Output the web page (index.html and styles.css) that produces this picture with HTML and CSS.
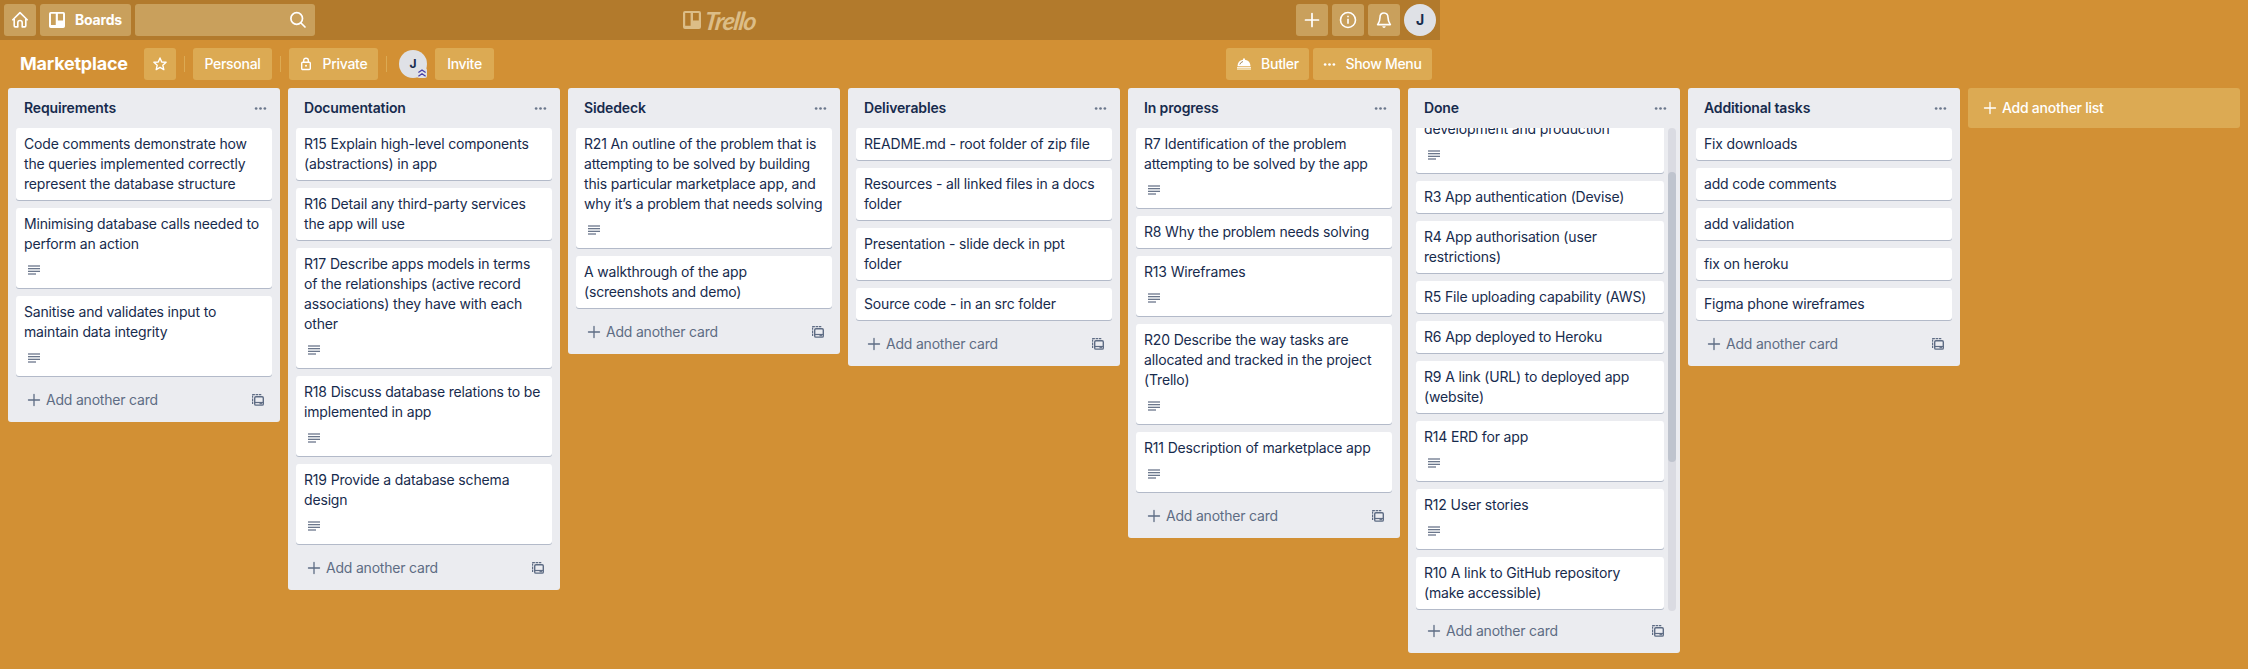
FILE: index.html
```html
<!DOCTYPE html>
<html lang="en">
<head>
<meta charset="utf-8">
<title>Marketplace | Trello</title>
<link rel="stylesheet" href="styles.css">
</head>
<body>
<svg class="sprite" aria-hidden="true">
  <symbol id="plus" viewBox="0 0 16 16"><path d="M8 1.700v12.600M1.700 8h12.600" fill="none" stroke="currentColor" stroke-width="1.500" stroke-linecap="round"/></symbol>
  <symbol id="dots" viewBox="0 0 14 14"><circle cx="2.300" cy="7" r="1.450"/><circle cx="7" cy="7" r="1.450"/><circle cx="11.700" cy="7" r="1.450"/></symbol>
  <symbol id="desc" viewBox="0 0 12 10"><path d="M0 0h12v2H0zM0 8h8v2H0z" opacity=".65"/><path d="M0 3h12v1H0zM0 6h12v1H0z"/><path d="M0 4h12v2H0z" opacity=".3"/></symbol>
  <symbol id="template" viewBox="0 0 12 12"><path d="M.6 10V.6H10" fill="none" stroke="currentColor" stroke-width="1.200" stroke-dasharray="2.400 .7"/><rect x="2.700" y="2.700" width="8.600" height="8.400" rx="1.200" fill="none" stroke="currentColor" stroke-width="1.400"/><path d="M3 8.500h8" stroke="currentColor" stroke-width="1.200"/><path d="M7.500 9.700h2.500" stroke="currentColor" stroke-width="1.200"/></symbol>
  <symbol id="board" viewBox="0 0 18 18"><path fill-rule="evenodd" d="M2 0h14a2 2 0 0 1 2 2v14a2 2 0 0 1-2 2H2a2 2 0 0 1-2-2V2a2 2 0 0 1 2-2zM2.200 2v12.700h5.400V2zM10 2v7.500h5.800V2z"/></symbol>
</svg>

<header class="topbar">
  <div class="topbar-side">
    <a class="nav-btn"><svg width="18" height="18" viewBox="0 0 18 18" fill="none" stroke="currentColor" stroke-width="1.600" stroke-linejoin="round" stroke-linecap="round"><path d="M1.800 8.800 9 1.600l7.200 7.200M3.200 8v6.800q0 1.100 1.100 1.100h2.500v-4.200q0-2.200 2.200-2.200t2.200 2.200v4.200h2.500q1.100 0 1.100-1.100V8"/></svg></a>
    <a class="nav-btn boards"><svg class="board-icon"><use href="#board"/></svg>Boards</a>
    <div class="search"><svg width="18" height="18" viewBox="0 0 18 18" fill="none" stroke="currentColor" stroke-width="1.700" stroke-linecap="round"><circle cx="7.700" cy="7.500" r="5.800"/><path d="m12 12 4 4"/></svg></div>
  </div>
  <div class="logo"><svg class="board-icon"><use href="#board"/></svg><span>Trello</span></div>
  <div class="topbar-side">
    <a class="nav-btn"><svg width="20" height="20" viewBox="0 0 20 20" fill="none" stroke="currentColor" stroke-width="1.700" stroke-linecap="round"><path d="M10 3.500v13M3.500 10h13"/></svg></a>
    <a class="nav-btn"><svg width="18" height="18" viewBox="0 0 18 18" fill="none" stroke="currentColor" stroke-width="1.600"><circle cx="9" cy="9" r="7.500"/><path d="M9 7.700v5M9 4.700v1.600"/></svg></a>
    <a class="nav-btn"><svg width="18" height="18" viewBox="0 0 18 18" fill="none" stroke="currentColor" stroke-width="1.600" stroke-linejoin="round"><path d="M9 2C6.200 2 5 4 5 6.500 5 10 3.800 11.600 2.600 13.600h12.800C14.200 11.600 13 10 13 6.500 13 4 11.800 2 9 2z"/><path d="M7.200 15.200h3.600Q10.400 17 9 17t-1.800-1.800z" fill="currentColor" stroke="none"/></svg></a>
    <span class="avatar avatar-lg">J</span>
  </div>
</header>

<div class="boardbar">
  <h1>Marketplace</h1>
  <a class="board-btn star"><svg width="14" height="14" viewBox="0 0 14 14" fill="none" stroke="currentColor" stroke-width="1.400" stroke-linejoin="round"><path d="m7 1 1.700 4 4.400.3-3.300 2.900 1 4.400L7 10.300l-3.800 2.300 1-4.400L.9 5.300 5.300 5z"/></svg></a>
  <i class="sep"></i>
  <a class="board-btn personal">Personal</a>
  <i class="sep"></i>
  <a class="board-btn private"><svg width="12" height="14" viewBox="0 0 12 14" fill="none" stroke="currentColor" stroke-width="1.400"><rect x="1.700" y="5.200" width="8.600" height="7.300" rx="1"/><path d="M3.700 5V3.300Q3.700 1.200 6 1.200t2.300 2.100V5"/><circle cx="6" cy="8.800" r="1" fill="currentColor" stroke="none"/></svg>Private</a>
  <i class="sep"></i>
  <span class="avatar avatar-sm">J<svg class="admin" viewBox="0 0 10 10"><path d="M1.400 4.500 5 2l3.600 2.500M1.400 8.300 5 5.800l3.600 2.500" fill="none" stroke="#4a3fa5" stroke-width="1.300"/></svg></span>
  <a class="board-btn invite">Invite</a>
  <a class="board-btn butler"><svg width="16" height="14" viewBox="0 0 16 14"><path d="M1.500 9.200Q1.700 3.600 7 2.700V1.400h2v1.300q5.300.9 5.500 6.500z" fill="#fff"/><path d="M3.800 7.500Q4.400 5.200 7 4.500" fill="none" stroke="#a58b60" stroke-width="1"/><path d="M1 10.200h14v1.200H1z" fill="#fff"/><path d="M1 11.400h14V13H1z" fill="#f1dba8"/></svg>Butler</a>
  <a class="board-btn menu"><svg width="13" height="13" fill="#fff"><use href="#dots"/></svg>Show Menu</a>
</div>

<main class="lists" id="lists"></main>
<script src="board.js"></script>
</body>
</html>
```
FILE: styles.css
```css
* { box-sizing: border-box; }
body { margin: 0; height: 669px; overflow: hidden; background: #d29034; color: #172b4d; font: 14px/20px Inter, "Liberation Sans", sans-serif; letter-spacing: -.165px; }
.sprite { display: none; }
svg { flex: none; }

.topbar { width: 1440px; height: 40px; padding: 4px; background: #b27a2c; display: flex; justify-content: space-between; }
.topbar-side { display: flex; gap: 4px; width: 600px; }
.topbar-side:last-child { justify-content: flex-end; }
.nav-btn { min-width: 32px; height: 32px; border-radius: 3px; background: #c9a05c; color: #fff; display: flex; align-items: center; justify-content: center; font-weight: 700; }
.boards { width: 91px; gap: 10px; font-size: 14px; letter-spacing: -.2px; }
.board-icon { width: 16px; height: 16px; fill: currentColor; }
.search { width: 180px; height: 32px; border-radius: 3px; background: #c9a05c; color: #fff; display: flex; align-items: center; justify-content: flex-end; padding-right: 8px; }
.logo { display: flex; align-items: center; gap: 4px; width: 74px; color: #dcbd87; }
.logo .board-icon { width: 18px; height: 18px; }
.logo span { font: italic 700 25px/30px Lato, sans-serif; letter-spacing: -1.1px; transform: skewX(-8deg); }

.avatar { border-radius: 50%; background: #dfe1e6; color: #172b4d; font-weight: 700; display: flex; align-items: center; justify-content: center; }
.avatar-lg { width: 32px; height: 32px; font-size: 14px; }
.avatar-sm { position: relative; width: 28px; height: 28px; font-size: 12px; margin: 0 8px 0 4px; }
.admin { position: absolute; right: 0; bottom: 0; width: 10px; height: 10px; background: #dfe1e6; border-radius: 2px; }

.boardbar { width: 1440px; height: 48px; padding: 8px 8px 8px 20px; display: flex; align-items: center; color: #fff; }
.boardbar h1 { width: 124px; margin: 0; font-size: 18px; line-height: 32px; font-weight: 700; letter-spacing: -.22px; white-space: nowrap; }
.board-btn { height: 32px; border-radius: 3px; background: #dcaa53; color: #fff; font-weight: 500; letter-spacing: -.3px; display: flex; align-items: center; justify-content: center; white-space: nowrap; }
.star { width: 32px; }
.sep { width: 1px; height: 16px; margin: 0 8px; background: #dcaa53; }
.personal { width: 79px; }
.private { width: 89px; gap: 11px; }
.invite { width: 59px; }
.butler { width: 83px; gap: 9px; margin: 0 4px 0 auto; }
.menu { width: 119px; gap: 9px; }

.lists { display: flex; align-items: flex-start; gap: 8px; padding: 0 8px; }
.list { width: 272px; flex: none; border-radius: 3px; background: #ebecf0; }
.list-head { height: 40px; padding: 0 13px 0 16px; display: flex; align-items: center; justify-content: space-between; }
.list-head h2 { margin: 0; font-size: 14px; line-height: 20px; font-weight: 600; letter-spacing: -.14px; }
.list-head svg { width: 13px; height: 13px; fill: #6b778c; }
.cards { padding: 0 8px; display: flex; flex-direction: column; gap: 8px; margin-bottom: 8px; }
.card { flex: none; padding: 6px 8px; border-radius: 3px; background: #fff; box-shadow: 0 1px 0 #b3bac9; white-space: nowrap; }
.badge { height: 28px; padding: 11px 4px 7px; }
.badge svg { display: block; width: 12px; height: 10px; fill: #6b778c; }
.foot { height: 38px; padding: 6px 16px 12px 19px; display: flex; align-items: center; color: #5e6c84; letter-spacing: -.2px; }
.foot svg:first-child { width: 14px; height: 14px; margin-right: 5px; }
.foot svg:last-child { width: 12px; height: 12px; margin-left: auto; }
.scroller { display: flex; height: 483px; margin-bottom: 4px; overflow: hidden; }
.scroller .cards { width: 264px; height: 483px; margin: 0; padding: 0 8px 2px; justify-content: flex-end; }
.track { width: 8px; height: 483px; margin-left: -4px; padding-top: 44px; border-radius: 4px; background: #dadbe2; }
.thumb { height: 290px; border-radius: 4px; background: #bfc4ce; }
.add-list { width: 272px; height: 40px; padding: 0 15px; border-radius: 3px; background: #dcaa53; color: #fff; font-weight: 500; letter-spacing: -.25px; display: flex; align-items: center; gap: 5px; }
.add-list svg { width: 14px; height: 14px; }
```
FILE: board.js
```js
// A trailing "*" marks a card that has a description.
const lists = [
  ["Requirements", ["Code comments demonstrate how|the queries implemented correctly|represent the database structure", "Minimising database calls needed to|perform an action*", "Sanitise and validates input to|maintain data integrity*"]],
  ["Documentation", ["R15 Explain high-level components|(abstractions) in app", "R16 Detail any third-party services|the app will use", "R17 Describe apps models in terms|of the relationships (active record|associations) they have with each|other*", "R18 Discuss database relations to be|implemented in app*", "R19 Provide a database schema|design*"]],
  ["Sidedeck", ["R21 An outline of the problem that is|attempting to be solved by building|this particular marketplace app, and|why it’s a problem that needs solving*", "A walkthrough of the app|(screenshots and demo)"]],
  ["Deliverables", ["README.md - root folder of zip file", "Resources - all linked files in a docs|folder", "Presentation - slide deck in ppt|folder", "Source code - in an src folder"]],
  ["In progress", ["R7 Identification of the problem|attempting to be solved by the app*", "R8 Why the problem needs solving", "R13 Wireframes*", "R20 Describe the way tasks are|allocated and tracked in the project|(Trello)*", "R11 Description of marketplace app*"]],
  ["Done", ["development and production*", "R3 App authentication (Devise)", "R4 App authorisation (user|restrictions)", "R5 File uploading capability (AWS)", "R6 App deployed to Heroku", "R9 A link (URL) to deployed app|(website)", "R14 ERD for app*", "R12 User stories*", "R10 A link to GitHub repository|(make accessible)"], true],
  ["Additional tasks", ["Fix downloads", "add code comments", "add validation", "fix on heroku", "Figma phone wireframes"]]
];

const icon = (name) => `<svg><use href="#${name}"/></svg>`;

const card = (text) => {
  const described = text.endsWith("*");
  const body = text.replace("*", "").replace(/\|/g, "<br>");
  return `<article class="card">${body}${described ? `<div class="badge">${icon("desc")}</div>` : ""}</article>`;
};

document.getElementById("lists").innerHTML = lists.map(([title, items, scrolls]) => {
  const cards = `<div class="cards">${items.map(card).join("")}</div>`;
  const body = scrolls ? `<div class="scroller">${cards}<div class="track"><div class="thumb"></div></div></div>` : cards;
  return `<section class="list"><div class="list-head"><h2>${title}</h2>${icon("dots")}</div>${body}<div class="foot">${icon("plus")}<span>Add another card</span>${icon("template")}</div></section>`;
}).join("") + `<div class="add-list">${icon("plus")}Add another list</div>`;
```
